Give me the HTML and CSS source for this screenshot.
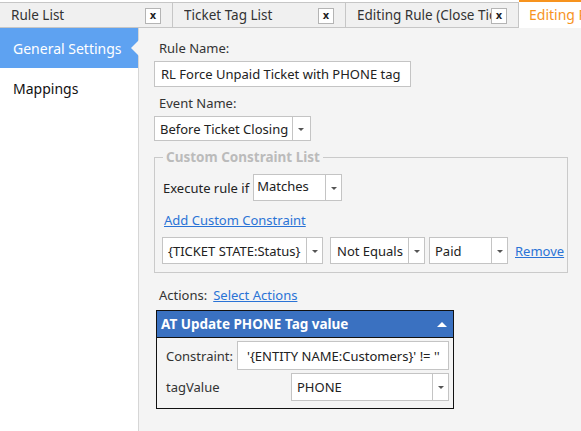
FILE: index.html
```html
<!DOCTYPE html>
<html>
<head>
<meta charset="utf-8">
<link rel="stylesheet" href="styles.css">
</head>
<body>
<div class="tabs">
  <div class="tab"><span class="tab-title">Rule List</span><span class="close">x</span></div>
  <div class="tab"><span class="tab-title">Ticket Tag List</span><span class="close">x</span></div>
  <div class="tab tight"><span class="tab-title">Editing Rule (Close Ticket)</span><span class="close">x</span></div>
  <div class="tab active"><span class="tab-title">Editing Rule</span></div>
</div>
<div class="main">
  <div class="sidebar">
    <div class="side-item selected">General Settings</div>
    <div class="side-item">Mappings</div>
  </div>
  <div class="content">
    <div class="label">Rule Name:</div>
    <div class="input wide">RL Force Unpaid Ticket with PHONE tag</div>
    <div class="label second">Event Name:</div>
    <div class="select event"><span class="val">Before Ticket Closing</span><span class="arrow"></span></div>
    <fieldset class="constraints">
      <legend>Custom Constraint List</legend>
      <div class="exec-row">
        <span class="exec-label">Execute rule if</span>
        <div class="select matches"><span class="val">Matches</span><span class="arrow"></span></div>
      </div>
      <a class="link add-link">Add Custom Constraint</a>
      <div class="cons-row">
        <div class="select s1"><span class="val">{TICKET STATE:Status}</span><span class="arrow"></span></div>
        <div class="select s2"><span class="val">Not Equals</span><span class="arrow"></span></div>
        <div class="select s3"><span class="val">Paid</span><span class="arrow"></span></div>
        <a class="link">Remove</a>
      </div>
    </fieldset>
    <div class="actions-row"><span>Actions:</span><a class="link">Select Actions</a></div>
    <div class="panel">
      <div class="panel-head"><span>AT Update PHONE Tag value</span><span class="caret"></span></div>
      <div class="panel-body">
        <div class="prow">
          <span class="plabel">Constraint:</span>
          <div class="input pin">'{ENTITY NAME:Customers}' != ''</div>
        </div>
        <div class="prow">
          <span class="plabel tv">tagValue</span>
          <div class="select ptag"><span class="val">PHONE</span><span class="arrow"></span></div>
        </div>
      </div>
    </div>
  </div>
</div>
</body>
</html>
```

FILE: styles.css
```css
* { box-sizing: border-box; }
html, body { margin: 0; padding: 0; }
body {
  width: 581px;
  height: 431px;
  overflow: hidden;
  background: #f4f4f4;
  font-family: "Noto Sans", "Open Sans", sans-serif;
  font-size: 13px;
  color: #222;
}
.tabs {
  display: flex;
  height: 28px;
  background: #fff;
}
.tab {
  width: 173px;
  flex: none;
  margin-top: 2px;
  height: 26px;
  background: #f0f0f0;
  border-top: 1px solid #c6c6c6;
  border-bottom: 1px solid #c6c6c6;
  border-right: 1px solid #c6c6c6;
  display: flex;
  align-items: center;
  padding: 0 11px 0 11px;
  gap: 4px;
  overflow: hidden;
}
.tab.tight { gap: 0; }
.tab-title {
  flex: 1;
  min-width: 0;
  white-space: nowrap;
  overflow: hidden;
  color: #333;
  font-size: 13.5px;
}
.close {
  flex: none;
  width: 16px;
  height: 16px;
  margin-top: 1px;
  background: #fff;
  border: 1px solid #b4b4b4;
  font-family: "DejaVu Sans", sans-serif;
  font-weight: bold;
  font-size: 10px;
  line-height: 13px;
  text-align: center;
  color: #222;
}
.tab.active {
  flex: 1;
  width: auto;
  margin-top: 0;
  height: 27px;
  background: #fff;
  border: none;
  border-top: 2px solid #f7931e;
  padding-left: 10px;
}
.tab.active .tab-title { color: #f7931e; font-size: 14px; overflow: visible; }
.main {
  display: flex;
  height: 403px;
}
.sidebar {
  width: 139px;
  flex: none;
  background: #fff;
  border-right: 1px solid #d6d6d6;
}
.side-item {
  height: 40px;
  display: flex;
  align-items: center;
  padding-left: 13px;
  font-size: 14px;
  color: #111;
}
.side-item.selected {
  position: relative;
  background: #5ea2f1;
  color: #fff;
}
.side-item.selected::after {
  content: "";
  position: absolute;
  right: -1px;
  top: 12px;
  border-top: 8px solid transparent;
  border-bottom: 8px solid transparent;
  border-right: 8px solid #f4f4f4;
}
.content {
  flex: 1;
  min-width: 0;
  padding: 10px 13px 0 15px;
}
.label {
  padding-left: 5px;
  height: 20px;
  line-height: 20px;
  color: #333;
}
.label.second { margin-top: 6px; }
.input {
  background: #fff;
  border: 1px solid #c4c4c4;
  display: flex;
  align-items: center;
  padding-left: 6px;
  white-space: nowrap;
  overflow: hidden;
  color: #222;
}
.input.wide {
  margin-top: 3px;
  width: 257px;
  height: 26px;
}
.select {
  background: #fff;
  border: 1px solid #c4c4c4;
  display: flex;
  align-items: stretch;
  white-space: nowrap;
  flex: none;
}
.select .val {
  flex: 1;
  display: flex;
  align-items: center;
  padding-left: 5px;
  overflow: hidden;
  color: #222;
}
.select .arrow {
  width: 16px;
  flex: none;
  border-left: 1px solid #c4c4c4;
  position: relative;
}
.select .arrow::after {
  content: "";
  position: absolute;
  left: 5px;
  top: 50%;
  margin-top: -1px;
  border-left: 3px solid transparent;
  border-right: 3px solid transparent;
  border-top: 3px solid #555;
}
.select.event {
  margin-top: 3px;
  width: 157px;
  height: 25px;
}
.select.event .arrow { width: 18px; }
.constraints {
  margin: 6px 0 0 0;
  width: 414px;
  min-width: 0;
  min-inline-size: 0;
  border: 1px solid #cacaca;
  padding: 6px 2px 6px 8px;
  height: 126px;
}
.constraints legend {
  padding: 0 3px;
  font-weight: bold;
  color: #bbb;
  font-size: 13.5px;
  line-height: 20px;
}
.exec-row {
  display: flex;
  align-items: center;
  gap: 4px;
  margin-top: 1px;
}
.exec-label { color: #222; }
.select.matches {
  width: 89px;
  height: 27px;
}
.select.matches .val { align-items: flex-start; padding-top: 2px; padding-left: 3px; }
.link {
  color: #2a73d6;
  text-decoration: underline;
  cursor: pointer;
  white-space: nowrap;
}
.add-link {
  display: block;
  width: max-content;
  margin-top: 9px;
  line-height: 20px;
  padding-left: 1px;
}
.cons-row {
  display: flex;
  align-items: center;
  margin-top: 7px;
  margin-left: -1px;
}
.cons-row .select { height: 27px; }
.select.s1 { width: 161px; margin-right: 7px; }
.select.s2 { width: 95px; margin-right: 4px; }
.select.s2 .val { padding-left: 6px; }
.select.s3 { width: 79px; margin-right: 7px; }
.actions-row {
  margin-top: 12px;
  padding-left: 5px;
  height: 20px;
  display: flex;
  align-items: center;
  gap: 6px;
  color: #333;
}
.panel {
  margin-top: 5px;
  margin-left: 2px;
  width: 298px;
  border: 1px solid #111;
}
.panel-head {
  height: 27px;
  background: #3a71c1;
  color: #fff;
  font-weight: bold;
  font-size: 13.5px;
  display: flex;
  align-items: center;
  justify-content: space-between;
  padding: 0 6px 0 4px;
  border-bottom: 1px solid #111;
}
.caret {
  width: 0;
  height: 0;
  border-left: 5px solid transparent;
  border-right: 5px solid transparent;
  border-bottom: 5px solid #fff;
}
.panel-body {
  padding: 3px 4px 7px 9px;
  display: flex;
  flex-direction: column;
  gap: 3px;
}
.prow {
  display: flex;
  align-items: center;
  justify-content: space-between;
}
.plabel { color: #333; }
.input.pin {
  width: 212px;
  height: 29px;
  padding-left: 9px;
}
.select.ptag {
  width: 158px;
  height: 28px;
}
.select.ptag .val { padding-left: 5px; }
```
